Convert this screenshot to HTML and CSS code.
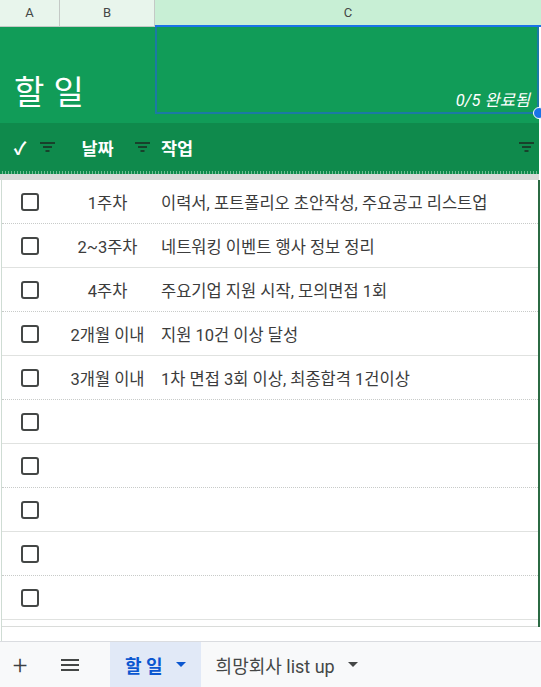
FILE: index.html
```html
<!DOCTYPE html>
<html lang="ko">
<head>
    <meta charset="UTF-8">
    <meta name="viewport" content="width=device-width, initial-scale=1.0">
    <title>할 일</title>
    <link rel="stylesheet" href="styles.css">
</head>
<body>
    <div class="sheet">
        <!-- 열 머리글 -->
        <div class="col-heads">
            <div class="col-head">A</div>
            <div class="col-head">B</div>
            <div class="col-head selected">C</div>
        </div>

        <!-- 제목 -->
        <div class="title-row">
            <div class="title">할 일</div>
            <div class="title-cell">
                <span class="progress">0/5 완료됨</span>
                <span class="handle"></span>
            </div>
        </div>
        <div class="title-gap"></div>

        <!-- 표 머리글 -->
        <div class="head-row">
            <div class="head-cell">
                <span class="head-text">✓</span>
                <svg class="filter" width="15" height="10" viewBox="0 0 15 10"><path d="M0 1h15M3 5h9M5.5 9h4" stroke="#1c2a21" stroke-width="1.6"/></svg>
            </div>
            <div class="head-cell">
                <span class="head-text">날짜</span>
                <svg class="filter" width="15" height="10" viewBox="0 0 15 10"><path d="M0 1h15M3 5h9M5.5 9h4" stroke="#1c2a21" stroke-width="1.6"/></svg>
            </div>
            <div class="head-cell task-head">
                <span class="head-text">작업</span>
                <svg class="filter" width="15" height="10" viewBox="0 0 15 10"><path d="M0 1h15M3 5h9M5.5 9h4" stroke="#1c2a21" stroke-width="1.6"/></svg>
            </div>
        </div>
        <div class="freeze"></div>

        <!-- 할 일 목록 -->
        <div class="rows">
            <div class="row"><span class="box"></span><span class="date">1주차</span><span class="task">이력서, 포트폴리오 초안작성, 주요공고 리스트업</span></div>
            <div class="row"><span class="box"></span><span class="date">2~3주차</span><span class="task">네트워킹 이벤트 행사 정보 정리</span></div>
            <div class="row"><span class="box"></span><span class="date">4주차</span><span class="task">주요기업 지원 시작, 모의면접 1회</span></div>
            <div class="row"><span class="box"></span><span class="date">2개월 이내</span><span class="task">지원 10건 이상 달성</span></div>
            <div class="row"><span class="box"></span><span class="date">3개월 이내</span><span class="task">1차 면접 3회 이상, 최종합격 1건이상</span></div>
            <div class="row"><span class="box"></span><span class="date"></span><span class="task"></span></div>
            <div class="row"><span class="box"></span><span class="date"></span><span class="task"></span></div>
            <div class="row"><span class="box"></span><span class="date"></span><span class="task"></span></div>
            <div class="row"><span class="box"></span><span class="date"></span><span class="task"></span></div>
            <div class="row"><span class="box"></span><span class="date"></span><span class="task"></span></div>
            <div class="tail"></div>
        </div>
        <div class="blank"></div>
    </div>

    <!-- 시트 탭 -->
    <div class="tabs">
        <span class="tab-btn plus">+</span>
        <span class="tab-btn menu">
            <svg width="18" height="12" viewBox="0 0 18 12"><path d="M0 1h18M0 6h18M0 11h18" stroke="#444746" stroke-width="2"/></svg>
        </span>
        <div class="tab active">할 일 <span class="caret"></span></div>
        <div class="tab">희망회사 list up <span class="caret"></span></div>
    </div>
</body>
</html>
```

FILE: styles.css
```css
* {
    margin: 0;
    padding: 0;
    box-sizing: border-box;
}

body {
    width: 541px;
    height: 687px;
    overflow: hidden;
    font-family: Roboto, "Noto Sans CJK KR", sans-serif;
    color: #3c4043;
    background: #fff;
}

.sheet {
    height: 641px;
}

/* 열 머리글 */
.col-heads {
    display: grid;
    grid-template-columns: 60px 95px 1fr;
    height: 27px;
}

.col-head {
    background: #e8f5ec;
    border-right: 1px solid #c4c9c6;
    border-bottom: 1px solid #c4c9c6;
    text-align: center;
    font-size: 13px;
    line-height: 26px;
    color: #444746;
}

.col-head.selected {
    background: #c8efd5;
    border-right: none;
    border-bottom: 2px solid #1a73e8;
    line-height: 25px;
}

/* 제목 */
.title-row {
    display: grid;
    grid-template-columns: 155px 1fr;
    height: 87px;
    width: 539px;
    background: #119c58;
}

.title {
    color: #fff;
    font-family: "Noto Sans CJK KR", sans-serif;
    font-size: 33px;
    padding: 43px 0 0 14px;
    line-height: 40px;
    white-space: nowrap;
}

.title-cell {
    position: relative;
    border: 2px solid #1b7aa4;
    border-top: none;
    display: flex;
    align-items: flex-end;
    justify-content: flex-end;
    padding: 0 7px 1px 0;
}

.progress {
    color: #fff;
    font-style: italic;
    font-size: 16.5px;
}

.handle {
    position: absolute;
    right: -8px;
    bottom: -7px;
    width: 12px;
    height: 12px;
    border-radius: 50%;
    background: #1a73e8;
    border: 1px solid #fff;
}

.title-gap {
    width: 539px;
    height: 9px;
    background: #119c58;
}

/* 표 머리글 */
.head-row {
    display: grid;
    grid-template-columns: 60px 95px 1fr;
    width: 539px;
    height: 48px;
    background: #0f8a4c;
}

.head-cell {
    display: flex;
    align-items: center;
    padding-right: 5px;
}

.head-text {
    flex: 1;
    color: #fff;
    font-family: "Noto Sans CJK KR", sans-serif;
    font-weight: bold;
    font-size: 17.5px;
    text-align: center;
}

.task-head .head-text {
    text-align: left;
    padding-left: 6px;
}

.filter {
    flex: none;
}

.freeze {
    width: 539px;
    height: 9px;
    background:
        repeating-linear-gradient(90deg, #0f8a4c 0 2px, #6fbf93 2px 3px) top / 100% 3px no-repeat,
        #d9dbd9;
}

/* 할 일 목록 */
.rows {
    width: 539px;
    margin-left: 1px;
    border-left: 1px solid #cfdcd4;
    border-right: 2px solid #2b6a43;
}

.row {
    display: grid;
    grid-template-columns: 58px 95px 1fr;
    align-items: center;
    height: 44px;
    border-bottom: 1px dotted #c8cbc9;
    font-family: Roboto, "Noto Sans CJK KR", sans-serif;
    font-size: 16.5px;
    color: #3c3c3c;
}

.row:nth-child(even) {
    border-bottom: 1px solid #e0e2e0;
}

.box {
    justify-self: center;
    width: 18px;
    height: 18px;
    border: 2px solid #444746;
    border-radius: 3px;
    margin-right: 2px;
}

.date {
    text-align: center;
    white-space: nowrap;
}

.task {
    padding-left: 6px;
    white-space: nowrap;
}

.tail {
    height: 7px;
    border-bottom: 1px solid #dadcda;
}

.blank {
    height: 14px;
    margin-left: 1px;
    border-left: 1px solid #cfdcd4;
}

/* 시트 탭 */
.tabs {
    display: flex;
    align-items: center;
    height: 46px;
    background: #f8f9fa;
    border-top: 1px solid #dadce0;
    color: #444746;
}

.tab-btn {
    display: flex;
    align-items: center;
    justify-content: center;
}

.plus {
    width: 40px;
    font-size: 26px;
    font-weight: 300;
    color: #3c4043;
}

.menu {
    width: 60px;
}

.tab {
    display: flex;
    align-items: center;
    height: 100%;
    padding: 0 15px;
    font-size: 18px;
    font-family: Roboto, "Noto Sans CJK KR", sans-serif;
    gap: 13px;
}

.tab.active {
    background: #e1e9f7;
    color: #0b57d0;
    font-weight: bold;
    margin-left: 10px;
}

.caret {
    width: 0;
    height: 0;
    border-left: 5px solid transparent;
    border-right: 5px solid transparent;
    border-top: 5px solid currentColor;
}
```
